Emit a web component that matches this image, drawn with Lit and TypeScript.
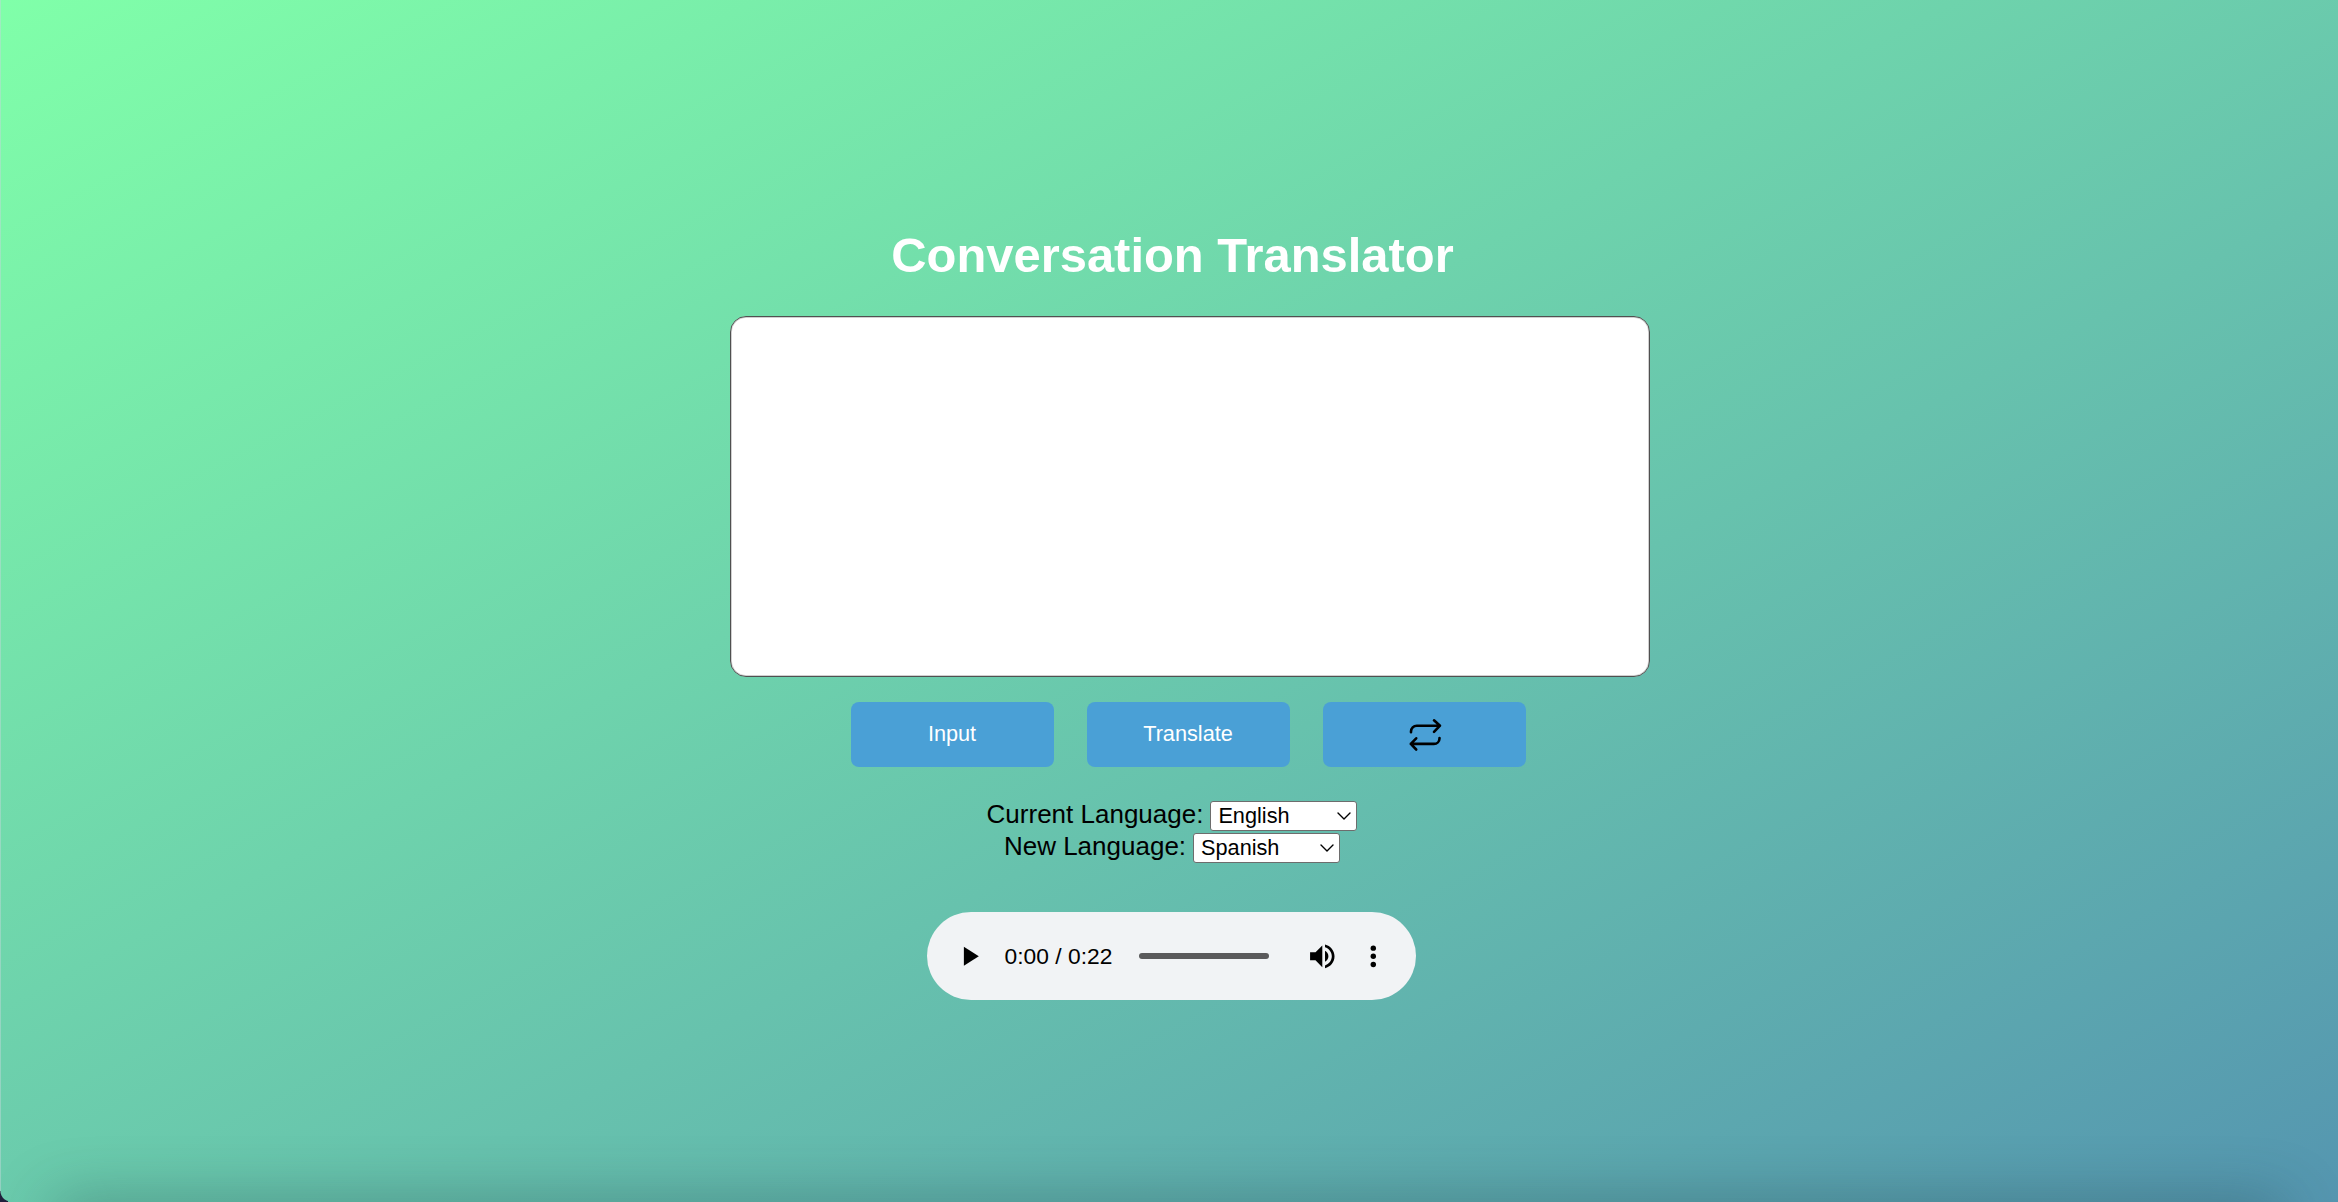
import { LitElement, html, css, svg } from "lit";
import { customElement, state } from "lit/decorators.js";

const chevron = html`<svg class="chev" viewBox="0 0 14 8">${svg`<path d="M1 1 L7 7 L13 1" fill="none" stroke="#000" stroke-width="1.4" stroke-linecap="round" stroke-linejoin="round"/>`}</svg>`;

@customElement("app-root")
export class AppRoot extends LitElement {
  @state() private current = "English";
  @state() private next = "Spanish";

  static styles = css`
    :host {
      display: block;
      font-family: "Liberation Sans", Arial, sans-serif;
    }
    * {
      box-sizing: border-box;
    }
    .page {
      position: relative;
      width: 100%;
      height: 1202px;
      overflow: hidden;
      display: flex;
      flex-direction: column;
      align-items: center;
      background: linear-gradient(to bottom right, #80ffa9 0%, #5596b0 100%);
    }
    .edge {
      position: absolute;
      left: 0;
      top: 0;
      bottom: 0;
      width: 1px;
      background: rgba(190, 215, 215, 0.5);
    }
    .shade {
      position: absolute;
      left: 60px;
      right: 60px;
      bottom: -36px;
      height: 30px;
      box-shadow: 0 0 60px 6px rgba(30, 60, 65, 0.4);
    }
    .corner {
      position: absolute;
      left: 0;
      bottom: 0;
      width: 8px;
      height: 11px;
      background: radial-gradient(circle 11px at 11px 0, transparent 10px, #20203c 11px);
    }
    h1 {
      margin: 227px 0 0 7px;
      font-size: 48.9px;
      line-height: 56px;
      font-weight: 700;
      color: #fff;
      white-space: nowrap;
    }
    .box {
      display: block;
      margin: 33px 0 0 42px;
      width: 920px;
      height: 361px;
      border: 1px solid #505050;
      border-radius: 16px;
      box-shadow: inset 0 0 0 1px #d0d0d0;
      background: #fff;
      resize: none;
      outline: none;
    }
    .buttons {
      display: flex;
      gap: 33px;
      margin: 25px 0 0 38px;
    }
    .btn {
      width: 203px;
      height: 65px;
      padding: 0 0 1px;
      border: 0;
      border-radius: 8px;
      background: #4aa0d6;
      color: #fff;
      font: 21.7px "Liberation Sans", Arial, sans-serif;
      display: flex;
      align-items: center;
      justify-content: center;
    }
    .swap {
      width: 50px;
      height: 50px;
      margin-left: 1px;
    }
    .langs {
      margin: 33px 0 0 6px;
      display: flex;
      flex-direction: column;
      align-items: center;
    }
    .row {
      height: 32px;
      display: flex;
      align-items: center;
      gap: 7px;
      font-size: 26px;
      line-height: 30px;
      color: #000;
    }
    .label {
      padding-bottom: 4px;
    }
    .select {
      width: 147px;
      height: 30px;
      margin-bottom: 1px;
      display: flex;
      align-items: center;
      justify-content: space-between;
      padding: 0 5.5px 0 7px;
      border: 1px solid #6d6d6d;
      border-radius: 3px;
      background: #fff;
      font-size: 21.7px;
    }
    .chev {
      width: 14px;
      height: 8px;
    }
    .player {
      margin: 48px 0 0 5px;
      width: 489px;
      height: 88px;
      border-radius: 44px;
      background: #f1f3f5;
      display: flex;
      align-items: center;
      padding: 0 26px;
    }
    .ico {
      width: 32.6px;
      height: 32.6px;
      flex: none;
    }
    .time {
      margin-left: 19px;
      width: 134px;
      flex: none;
      font-size: 22.8px;
      white-space: nowrap;
    }
    .track {
      width: 130px;
      flex: none;
      height: 6.5px;
      border-radius: 4px;
      background: #5a5a5b;
      margin-right: 37px;
    }
    .more {
      margin-left: 19px;
    }
  `;

  render() {
    return html`
      <main class="page">
        <h1>Conversation Translator</h1>
        <textarea class="box" aria-label="Conversation"></textarea>
        <div class="buttons">
          <button class="btn">Input</button>
          <button class="btn">Translate</button>
          <button class="btn" aria-label="Swap">
            <svg class="swap" viewBox="0 0 50 50" fill="none" stroke="#000" stroke-width="2.6" stroke-linecap="round" stroke-linejoin="round">
              <path d="M11 23.3V22.5a5.8 5.8 0 0 1 5.8-5.8H40M34 11.3l6 5.4-6 6.2" />
              <path d="M39.5 29v.4a5.6 5.6 0 0 1-5.6 5.5H10.8M16.2 29.3l-5.4 5.6 5.4 5.6" />
            </svg>
          </button>
        </div>
        <section class="langs">
          <div class="row"><span class="label">Current Language:</span><span class="select">${this.current}${chevron}</span></div>
          <div class="row"><span class="label">New Language:</span><span class="select">${this.next}${chevron}</span></div>
        </section>
        <div class="player">
          <svg class="ico" viewBox="0 0 24 24"><path d="M8 5v14l11-7z" /></svg>
          <span class="time">0:00 / 0:22</span>
          <div class="track"></div>
          <svg class="ico" viewBox="0 0 24 24"><path d="M3 9v6h4l5 5V4L7 9H3zm13.5 3c0-1.77-1.02-3.29-2.5-4.03v8.05c1.48-.73 2.5-2.25 2.5-4.02zM14 3.23v2.06c2.89.86 5 3.54 5 6.71s-2.11 5.85-5 6.71v2.06c4.01-.91 7-4.49 7-8.77s-2.99-7.86-7-8.77z" /></svg>
          <svg class="ico more" viewBox="0 0 24 24"><circle cx="12" cy="6" r="2" /><circle cx="12" cy="12" r="2" /><circle cx="12" cy="18" r="2" /></svg>
        </div>
        <div class="edge"></div>
        <div class="shade"></div>
        <div class="corner"></div>
      </main>
    `;
  }
}
